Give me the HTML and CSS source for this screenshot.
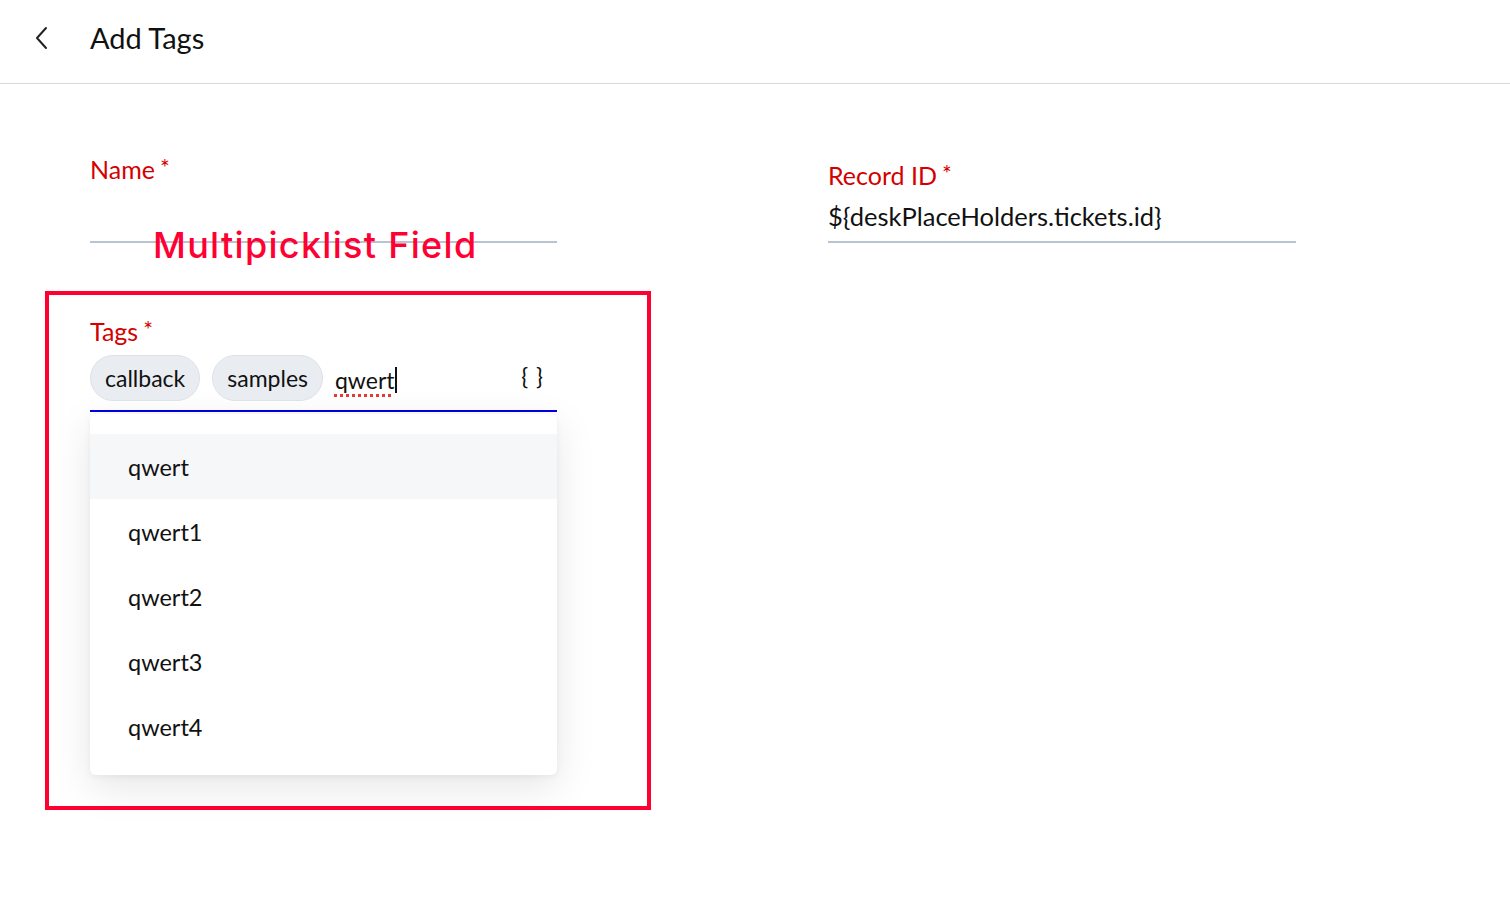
FILE: index.html
```html
<!DOCTYPE html>
<html lang="en">
<head>
<meta charset="utf-8">
<title>Add Tags</title>
<link rel="stylesheet" href="styles.css">
</head>
<body>
<header class="topbar">
  <button class="back" aria-label="Back">
    <svg width="16" height="24" viewBox="0 0 16 24"><path d="M12 2 L3 12 L12 22" fill="none" stroke="#222" stroke-width="2" stroke-linecap="round" stroke-linejoin="round"/></svg>
  </button>
  <h1 class="title">Add Tags</h1>
</header>
<main class="form">
  <div class="row">
    <div class="field field-name">
      <label class="label">Name<span class="req">*</span></label>
      <div class="input"></div>
    </div>
    <div class="field field-record">
      <label class="label">Record ID<span class="req">*</span></label>
      <div class="input value">${deskPlaceHolders.tickets.id}</div>
    </div>
  </div>
  <div class="tags-field">
    <label class="label">Tags<span class="req">*</span></label>
    <div class="tag-input">
      <span class="chip">callback</span>
      <span class="chip">samples</span>
      <span class="typed">qwert</span><span class="caret"></span>
      <span class="braces">{ }</span>
    </div>
    <ul class="dropdown">
      <li class="opt active">qwert</li>
      <li class="opt">qwert1</li>
      <li class="opt">qwert2</li>
      <li class="opt">qwert3</li>
      <li class="opt">qwert4</li>
    </ul>
  </div>
  <div class="annot-title">Multipicklist Field</div>
  <div class="annot-box"></div>
</main>
</body>
</html>
```
FILE: styles.css
```css
* { box-sizing: border-box; }
html, body { margin: 0; padding: 0; background: #fff; }
body {
  font-family: Lato, "Open Sans", "Liberation Sans", sans-serif;
  color: #111;
  width: 1510px;
  height: 902px;
  overflow: hidden;
}
.topbar {
  height: 84px;
  border-bottom: 1px solid #d9d9d9;
  display: flex;
  align-items: center;
  padding-left: 34px;
  padding-bottom: 8px;
}
.back {
  border: 0;
  background: none;
  padding: 0;
  width: 16px;
  height: 24px;
  margin-right: 40px;
  display: flex;
}
.title {
  margin: 0;
  font-size: 29px;
  font-weight: 400;
  color: #111;
}
.form {
  position: relative;
  padding: 66px 0 0 90px;
}
.row {
  display: grid;
  grid-template-columns: 467px 468px;
  column-gap: 271px;
}
.field { display: flex; flex-direction: column; }
.label {
  display: block;
  height: 30px;
  color: #d40000;
  font-size: 25px;
  line-height: 30px;
}
.req { font-size: 23px; margin-left: 5px; vertical-align: 3px; line-height: 20px; }
.field-name .label { margin-top: 4px; }
.field-name .input { height: 59px; border-bottom: 2px solid #b9c4d3; }
.field-record .label { margin-top: 10px; }
.field-record .input {
  border-bottom: 2px solid #b9c4d3;
  font-size: 25.5px;
  line-height: 30px;
  padding: 11px 0 10px;
  color: #111;
}
.tags-field { width: 467px; margin-top: 73px; }
.tag-input {
  display: flex;
  align-items: center;
  gap: 12px;
  padding: 9px 0 9px;
  border-bottom: 2px solid #0000e0;
}
.chip {
  height: 46px;
  padding: 0 14px;
  border-radius: 23px;
  background: #e9edf1;
  border: 1px solid #dde2e8;
  display: flex;
  align-items: center;
  font-size: 23px;
  color: #111;
}
.typed {
  font-size: 23px;
  text-decoration: underline dotted #e53935;
  text-decoration-thickness: 3px;
  text-underline-offset: 5px;
  margin-top: 4px;
}
.caret {
  width: 2px;
  height: 26px;
  background: #111;
  margin-left: -12px;
  margin-top: 4px;
}
.braces {
  margin-left: auto;
  margin-right: 13px;
  font-size: 23px;
  margin-top: -4px;
  letter-spacing: 1px;
}
.dropdown {
  list-style: none;
  margin: 2px 0 0;
  padding: 20px 0 16px;
  background: #fff;
  border-radius: 6px;
  box-shadow: 0 12px 40px rgba(0,0,0,0.10), 0 2px 6px rgba(0,0,0,0.05);
}
.opt {
  height: 65px;
  display: flex;
  align-items: center;
  padding-left: 38px;
  font-size: 23.5px;
  color: #111;
}
.opt.active { background: #f6f7f9; }
.annot-title {
  position: absolute;
  left: 153px;
  top: 139px;
  font-family: Inter, "Noto Sans", sans-serif;
  font-weight: 500;
  font-size: 36px;
  color: #ff0033;
  letter-spacing: 1.3px;
}
.annot-box {
  position: absolute;
  left: 45px;
  top: 207px;
  width: 606px;
  height: 519px;
  border: 4px solid #ff0033;
  pointer-events: none;
}
```
